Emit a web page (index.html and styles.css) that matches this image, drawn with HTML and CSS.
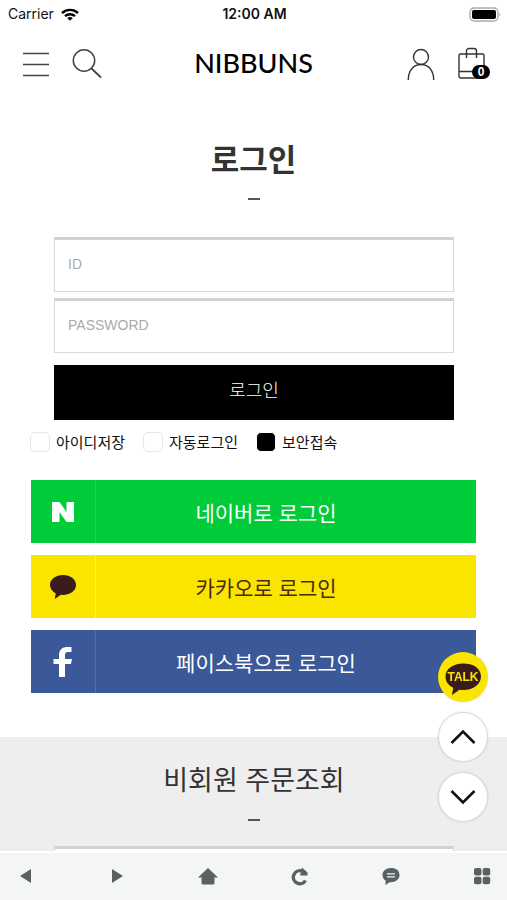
FILE: index.html
```html
<!DOCTYPE html>
<html lang="ko">
<head>
<meta charset="utf-8">
<meta name="viewport" content="width=device-width, initial-scale=1">
<title>NIBBUNS 로그인</title>
<link rel="stylesheet" href="styles.css">
</head>
<body>
<div class="status">
  <div class="carrier">Carrier
    <svg width="18" height="13" viewBox="0 0 18 13" fill="none" stroke="#000" stroke-width="2.4"><path d="M1 5C5.500 .8 12.500 .8 17 5M4 8.200C6.800 5.600 11.200 5.600 14 8.200"/><path d="M6.200 10Q9 7.800 11.800 10L9 12.800Z" fill="#000" stroke="none"/></svg>
  </div>
  <div class="clock">12:00 AM</div>
  <div class="battery">
    <svg width="32" height="15" viewBox="0 0 32 15"><rect x="1" y="1" width="28" height="13" rx="4" fill="#fff" stroke="#aaa" stroke-width="1.300"/><rect x="3" y="3" width="24" height="9" rx="2"/><path d="M30.500 5.500q1.500 2 0 4z" fill="#999"/></svg>
  </div>
</div>
<header class="header">
  <div class="tools">
    <button class="icon" aria-label="메뉴"><svg width="26" height="32" viewBox="0 0 26 32" stroke="#444" stroke-width="1.600"><path d="M0 5.500h26M0 16.500h26M0 27.500h26"/></svg></button>
    <button class="icon" aria-label="검색"><svg width="30" height="32" viewBox="0 0 30 32" fill="none" stroke="#444" stroke-width="1.500"><circle cx="12" cy="12.500" r="10.700"/><path d="M19.500 20.500L29 29.500" stroke-width="1.800"/></svg></button>
  </div>
  <a class="brand" href="#">NIBBUNS</a>
  <div class="tools tools-right">
    <a class="icon" href="#" aria-label="마이페이지"><svg width="28" height="34" viewBox="0 0 28 34" fill="none" stroke="#333" stroke-width="1.400"><circle cx="14" cy="10" r="7.500"/><path d="M1.300 33C1.300 24 6 17.500 14 17.500S26.700 24 26.700 33"/></svg></a>
    <a class="icon cart" href="#" aria-label="장바구니"><svg width="28" height="34" viewBox="0 0 28 34" fill="none" stroke="#333" stroke-width="1.400"><rect x="1" y="7" width="25" height="24" rx="1.500"/><path d="M1 24.500h25M8.500 11V4q0-2.500 2.500-2.500h5q2.500 0 2.500 2.500v7"/></svg><span class="count">0</span></a>
  </div>
</header>
<main class="page">
  <section class="login">
    <h1 class="title">로그인</h1>
    <span class="dash"></span>
    <form class="form">
      <div class="fields">
        <input class="field" type="text" placeholder="ID" aria-label="ID">
        <input class="field" type="password" placeholder="PASSWORD" aria-label="PASSWORD">
        <button class="submit" type="button">로그인</button>
      </div>
      <div class="options">
        <label class="option"><input type="checkbox">아이디저장</label>
        <label class="option"><input type="checkbox">자동로그인</label>
        <label class="option"><input type="checkbox" checked>보안접속</label>
      </div>
    </form>
    <div class="socials">
      <button class="social naver"><span class="mark"><svg width="24" height="24" viewBox="0 0 24 24" fill="#fff"><path d="M1 2h7.500l7 10V2H23v20h-7.500l-7-10v10H1z"/></svg></span><span class="label">네이버로 로그인</span></button>
      <button class="social kakao"><span class="mark"><svg width="28" height="26" viewBox="0 0 28 26" fill="#3b1c1c"><path d="M14 1C6.800 1 1 5.300 1 11c0 3.600 2.200 6.600 5.700 8.400L5.800 25l6-4.200c9 .8 15.200-3.800 15.200-9.800C27 5.300 21.200 1 14 1z"/></svg></span><span class="label">카카오로 로그인</span></button>
      <button class="social facebook"><span class="mark"><svg width="20" height="32" viewBox="0 0 20 32" fill="#fff"><path d="M6 31V18H.5v-5H6V9.500C6 4 9 1 14 1h4.500v5H15c-2.200 0-3 1-3 3v4h7l-1 5h-6v13z"/></svg></span><span class="label">페이스북으로 로그인</span></button>
    </div>
  </section>
  <section class="guest">
    <h2 class="subtitle">비회원 주문조회</h2>
    <span class="dash"></span>
    <input class="field order" type="text" aria-label="주문자명">
  </section>
</main>
<div class="floating">
  <a class="round talk" href="#" aria-label="카카오톡 상담"><svg width="50" height="50" viewBox="0 0 50 50"><path d="M25 11.500C15 11.500 7.500 17 7.500 24.500c0 5 3 9 7.700 11.200L14 43l7.500-5.300C34 39.200 43 33 43 24.500S35 11.500 25 11.500z" fill="#3b1c1c"/><text class="talk-text" x="25" y="29" text-anchor="middle">TALK</text></svg></a>
  <button class="round" aria-label="위로"><svg width="26" height="16" viewBox="0 0 26 16" fill="none" stroke="#111" stroke-width="2.600"><path d="M1.500 14L13 2.500 24.500 14"/></svg></button>
  <button class="round" aria-label="아래로"><svg width="26" height="16" viewBox="0 0 26 16" fill="none" stroke="#111" stroke-width="2.600"><path d="M1.500 2L13 13.500 24.500 2"/></svg></button>
</div>
<nav class="toolbar">
  <button class="icon" aria-label="뒤로"><svg width="20" height="20" viewBox="0 0 20 20"><path d="M4 10L15 3v14z"/></svg></button>
  <button class="icon" aria-label="앞으로"><svg width="20" height="20" viewBox="0 0 20 20"><path d="M16 10L5 3v14z"/></svg></button>
  <button class="icon" aria-label="홈"><svg width="20" height="20" viewBox="0 0 20 20"><path d="M10 2L20 11.500h-3.500V17q0 1.500-1.500 1.500H5q-1.500 0-1.500-1.500v-5.500H0z"/></svg></button>
  <button class="icon" aria-label="새로고침"><svg width="20" height="20" viewBox="0 0 20 20"><path d="M15.500 14.500A6.500 6.500 0 1 1 12 5.100" fill="none" stroke="#596263" stroke-width="3.400"/><path d="M12 1.500L17.500 6.500V9.500H10z"/></svg></button>
  <button class="icon" aria-label="메시지"><svg width="20" height="20" viewBox="0 0 20 20"><path d="M10 2C5 2 1.500 5 1.500 9c0 2.500 1.200 4.500 3.200 5.700L4.500 19l4-2.800C14.500 16.500 18.500 13.500 18.500 9S15 2 10 2z"/><path d="M6 7.800h8M6 10.800h8" stroke="#f4f4f4" stroke-width="1.200"/></svg></button>
  <button class="icon" aria-label="전체 메뉴"><svg width="20" height="20" viewBox="0 0 20 20"><rect x="2" y="2" width="7.500" height="7.500" rx="2"/><rect x="10.700" y="2" width="7.500" height="7.500" rx="2"/><rect x="2" y="10.700" width="7.500" height="7.500" rx="2"/><rect x="10.700" y="10.700" width="7.500" height="7.500" rx="2"/></svg></button>
</nav>
</body>
</html>
```
FILE: styles.css
```css
* { box-sizing: border-box; }
body {
  margin: 0;
  height: 100vh;
  display: flex;
  flex-direction: column;
  overflow: hidden;
  background: #fff;
  color: #333;
  font-family: "Liberation Sans", "Noto Sans CJK KR", sans-serif;
}
button { border: 0; padding: 0; background: none; color: inherit; font: inherit; }
a { color: inherit; text-decoration: none; }
svg { display: block; }

.status {
  display: grid;
  grid-template-columns: 1fr auto 1fr;
  align-items: center;
  height: 28px;
  padding: 0 6px 0 8px;
  color: #111;
  font: 14px/20px Inter, sans-serif;
}
.carrier { display: flex; align-items: center; gap: 7px; }
.clock { font-weight: 600; }
.battery { justify-self: end; }

.header {
  display: grid;
  grid-template-columns: 1fr auto 1fr;
  align-items: center;
  height: 72px;
  padding: 0 17px;
}
.tools { display: flex; align-items: center; gap: 23px; padding-left: 6px; }
.tools-right { justify-content: flex-end; }
.brand { padding-bottom: 3px; color: #000; font: 500 27px/36px Lato, sans-serif; }
.cart { position: relative; padding-right: 4px; }
.count {
  position: absolute;
  right: 0;
  bottom: 2px;
  width: 18px;
  border-radius: 7px;
  background: #000;
  color: #fff;
  font: bold 12px/14px "Liberation Sans", sans-serif;
  text-align: center;
}

.page { flex: 1; min-height: 0; overflow: hidden; }
.title, .subtitle { margin: 0; text-align: center; font-family: "Noto Sans CJK KR", sans-serif; }
.title { padding-top: 34px; font-size: 31px; line-height: 48px; font-weight: 700; }
.dash { display: block; width: 12px; height: 2px; margin: 16px auto 0; background: #555; }

.fields { display: flex; flex-direction: column; gap: 6px; margin: 37px 53px 0 54px; }
.field {
  width: 100%;
  height: 55px;
  border: 1px solid #d9d9d9;
  border-top: 3px solid #d2d2d2;
  padding: 0 13px 3px;
  background: #fff;
  font: 14px "Liberation Sans", sans-serif;
}
.field::placeholder { color: #aaa; }
.submit { height: 55px; margin-top: 6px; padding-bottom: 8px; background: #000; color: #fff; font: 300 18px "Noto Sans CJK KR", sans-serif; }
.options { display: flex; gap: 18px; margin: 10px 30px 0; }
.option { display: flex; align-items: center; gap: 6px; color: #111; font: 15px/24px "Noto Sans CJK KR", sans-serif; }
.option input {
  appearance: none;
  width: 20px;
  height: 20px;
  margin: 0;
  border: 1px solid #e6e6e6;
  border-radius: 5px;
}
.option input:checked { background: #000; border-color: #fff; }

.socials { display: grid; gap: 12px; margin: 26px 31px 0; }
.social { display: flex; align-items: center; height: 63px; padding-right: 40px; color: #fff; font: 21px "Noto Sans CJK KR", sans-serif; }
.mark { display: grid; place-items: center; width: 65px; height: 100%; border-right: 1px solid rgba(255, 255, 255, .12); }
.label { flex: 1; }
.naver { background: #00cc39; }
.kakao { background: #fae500; color: #4a2b12; }
.kakao .mark { border-color: rgba(255, 255, 255, .4); }
.facebook { background: #3b5998; }

.guest { margin-top: 44px; padding: 20px 53px 0 54px; background: #eee; }
.subtitle { font-size: 27px; line-height: 44px; font-weight: 400; }
.guest .dash { margin-top: 18px; }
.order { display: block; margin-top: 25px; }

.floating { position: fixed; right: 19px; bottom: 78px; display: grid; gap: 10px; }
.round { display: grid; place-items: center; width: 50px; height: 50px; border: 1px solid #d8d8d8; border-radius: 50%; background: #fff; box-shadow: 0 0 2px rgba(0, 0, 0, .15); }
.talk { border: 0; background: #fae500; }
.talk-text { fill: #fae500; font: 700 12px "Liberation Sans", sans-serif; }

.toolbar {
  display: flex;
  align-items: center;
  justify-content: space-between;
  height: 49px;
  padding: 0 15px 2px 16px;
  border-top: 2px solid #fff;
  background: #f4f5f5;
  fill: #596263;
}
```
